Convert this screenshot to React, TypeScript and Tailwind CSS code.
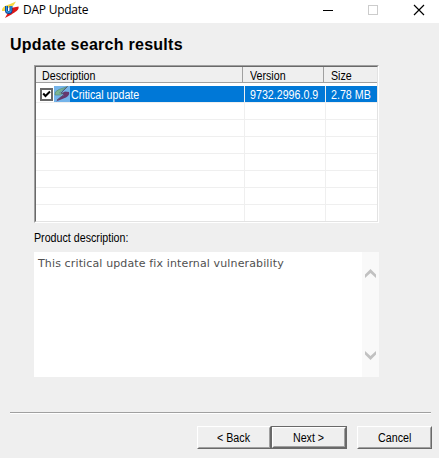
import type { ReactNode } from "react";

const ui = "font-['Liberation_Sans',Arial,sans-serif] text-[12px] whitespace-nowrap";

function Label({ children, center = false }: { children: ReactNode; center?: boolean }) {
  return (
    <span className={`inline-block scale-x-[0.89] ${center ? "origin-center" : "origin-left"}`}>
      {children}
    </span>
  );
}

function AppIcon() {
  return (
    <svg width="18" height="18" viewBox="0 0 18 18">
      <path d="M0 10C0 6 3 4.5 7 3.5L14 0.5L11.5 4.5L6 7L3 10Z" fill="#f6d743" />
      <path d="M9 7L16.5 5.5C17.5 9 13 11 9.5 13.5L3 17L5.5 12.5L9 11Z" fill="#dd1717" />
      <path d="M4.5 5V9.5Q4.5 11.5 6.7 11.5Q9 11.5 9 9.5V5" fill="none" stroke="#133f91" strokeWidth="3" />
      <path d="M4.5 5V9.5Q4.5 11.2 6.7 11.2Q9 11.2 9 9.5V5" fill="none" stroke="#2ba2e8" strokeWidth="1.2" />
    </svg>
  );
}

function RowIcon() {
  return (
    <svg width="16" height="16" viewBox="0 0 16 16" className="shrink-0 bg-[#74b4ea]">
      <path d="M13.5 0.5L5 3.5Q0 5.5 1 9L6.5 9L9 7L5.5 7L8 4.5Z" fill="#7bb593" stroke="#528572" strokeWidth="0.6" />
      <path d="M2 15.5L6.5 11L10 9L8 7L11 5.5L15 6Q16 9 12 11.5Z" fill="#65386e" />
      <path d="M13.5 0.5L7 7L10 8.5L3 14" fill="none" stroke="#55506e" strokeWidth="0.9" />
    </svg>
  );
}

function Arrow({ down = false }: { down?: boolean }) {
  return (
    <svg width="11" height="9" viewBox="0 0 11 9" className={down ? "rotate-180" : ""}>
      <path d="M0 5.5L5.5 0L11 5.5V9L5.5 4L0 9Z" fill="#c1c1c1" />
    </svg>
  );
}

function Button({ children, width, primary = false }: { children: ReactNode; width: string; primary?: boolean }) {
  return (
    <button className={`${ui} ${width} h-[23px] ${primary ? "border border-[#696969]" : ""}`}>
      <span className="flex h-full items-center justify-center border border-t-white border-l-white border-r-[#696969] border-b-[#696969]">
        <span className="flex h-full w-full items-center justify-center border border-t-[#f0f0f0] border-l-[#f0f0f0] border-r-[#a0a0a0] border-b-[#a0a0a0]">
          <Label center>{children}</Label>
        </span>
      </span>
    </button>
  );
}

export default function App() {
  return (
    <main className="flex h-[458px] w-[439px] flex-col overflow-hidden bg-[#efefef] text-black">
      <header className="flex h-[23px] shrink-0 items-start bg-white pl-[2px]">
        <div className="mt-px"><AppIcon /></div>
        <span className="ml-[3px] mt-[1px] font-['Open_Sans',sans-serif] text-[12px] leading-[18px] tracking-[-0.25px]">DAP Update</span>
        <svg className="ml-auto mr-[14px] mt-[4px]" width="102" height="12" viewBox="0 0 102 12" fill="none" shapeRendering="crispEdges">
          <path d="M0 6.5H10" stroke="#000" />
          <path d="M45.5 1.5H54.5V10.5H45.5Z" stroke="#ccc" />
          <path d="M91 1L101 11M101 1L91 11" stroke="#000" strokeWidth="1.2" shapeRendering="auto" />
        </svg>
      </header>
      <h1 className="mt-[12px] ml-[10px] h-[20px] font-['Liberation_Sans',Arial,sans-serif] text-[16px] leading-[20px] font-bold tracking-[0.27px] whitespace-nowrap">Update search results</h1>

      <section className="mt-[10px] ml-[34px] h-[158px] w-[345px] shrink-0 border border-t-[#a0a0a0] border-l-[#a0a0a0] border-r-white border-b-white">
        <div className="h-full border border-t-[#696969] border-l-[#696969] border-r-[#e3e3e3] border-b-[#e3e3e3] bg-white">
          <div className={`${ui} flex h-[16px] border-b border-[#a0a0a0] bg-[#efefef] leading-[18px]`}>
            <span className="w-[207px] border-r border-[#a0a0a0] pl-[6px]"><Label>Description</Label></span>
            <span className="ml-px w-[80px] border-r border-[#a0a0a0] pl-[6px]"><Label>Version</Label></span>
            <span className="ml-px flex-1 pl-[6px]"><Label>Size</Label></span>
          </div>
          <div className={`${ui} mt-[3px] ml-[2px] flex h-[16px] bg-[#0078d7] leading-[18px] text-white`}>
            <span className="flex w-[207px] shrink-0 border-r border-[#efefef]">
              <span className="flex h-[16px] w-[16px] shrink-0 items-center bg-white pl-[2px]">
                <svg width="13" height="13" viewBox="0 0 13 13" fill="none">
                  <path d="M1 1H12V12H1Z" stroke="#686868" strokeWidth="2" />
                  <path d="M3.2 5.5L5.5 8L10 3.5" stroke="#000" strokeWidth="2" />
                </svg>
              </span>
              <RowIcon />
              <span className="pl-px"><Label>Critical update</Label></span>
            </span>
            <span className="w-[81px] shrink-0 border-r border-[#efefef] pl-[5px]"><Label>9732.2996.0.9</Label></span>
            <span className="pl-[5px]"><Label>2.78 MB</Label></span>
          </div>
          {[0, 1, 2, 3, 4, 5, 6].map((row) => (
            <div key={row} className="flex h-[17px] border-t border-[#efefef]">
              <span className="w-[209px] border-r border-[#efefef]" />
              <span className="w-[81px] border-r border-[#efefef]" />
            </div>
          ))}
        </div>
      </section>

      <p className={`${ui} mt-[7px] ml-[34px] h-[22px] leading-[17px]`}><Label>Product description:</Label></p>
      <section className="ml-[34px] flex h-[125px] w-[345px] shrink-0 bg-white">
        <p className="flex-1 pt-[3px] pl-[4px] font-['DejaVu_Sans',Verdana,sans-serif] text-[11px] leading-[17px] tracking-[0.13px] whitespace-nowrap text-[#505050]">This critical update fix internal vulnerability</p>
        <div className="flex w-[17px] flex-col items-center justify-between bg-[#f9f9f9] py-[17px]">
          <Arrow /><Arrow down />
        </div>
      </section>
      <div className="mt-[35px] ml-[10px] h-[2px] w-[421px] shrink-0 border-t border-[#a0a0a0] bg-white" />
      <footer className="mt-[12px] ml-[197px] flex">
        <Button width="w-[74px]">&lt; Back</Button>
        <Button width="w-[76px]" primary>Next &gt;</Button>
        <span className="w-[10px]" />
        <Button width="w-[75px]">Cancel</Button>
      </footer>
    </main>
  );
}
